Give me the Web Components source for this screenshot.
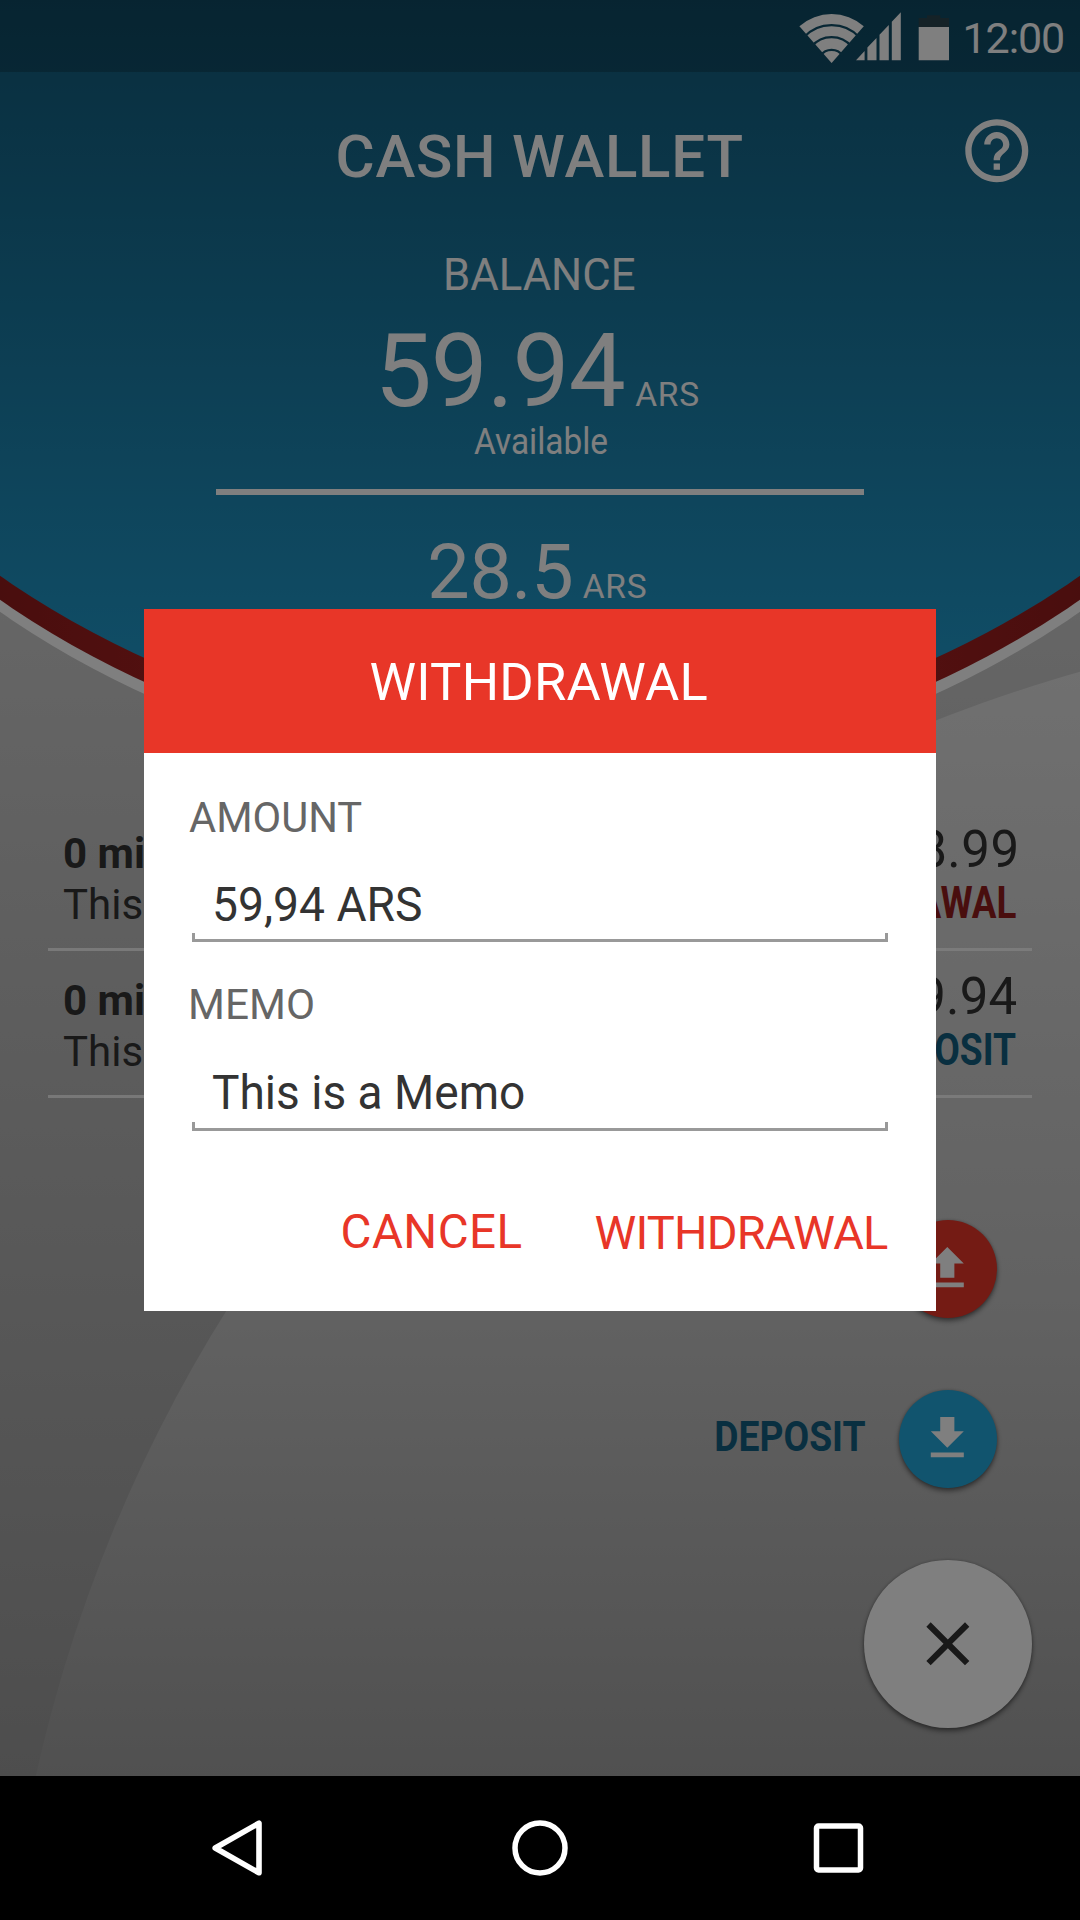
<!DOCTYPE html>
<html lang="en">
<head>
<meta charset="utf-8">
<title>Cash Wallet</title>
<style>
  html, body { margin: 0; padding: 0; background: #000; }
  body { width: 1080px; height: 1920px; overflow: hidden; font-family: Roboto, sans-serif; }
</style>
</head>
<body>
<wallet-app></wallet-app>

<script>
const define = (name, html, setup) => {
  const template = document.createElement('template');
  template.innerHTML = html;
  customElements.define(name, class extends HTMLElement {
    connectedCallback() {
      if (this.shadowRoot) return;
      this.attachShadow({ mode: 'open' }).append(template.content.cloneNode(true));
      if (setup) setup(this, this.shadowRoot);
    }
  });
};

/* A single line of text whose glyphs span exactly `width` pixels.
   Spacing is spread between letters, or the glyphs are narrowed with `squeeze`. */
const pen = document.createElement('canvas').getContext('2d');
customElements.define('fit-label', class extends HTMLElement {
  connectedCallback() {
    if (this.shadowRoot) return;
    const size = +this.getAttribute('size');
    const weight = this.getAttribute('weight') || 400;
    const width = +this.getAttribute('width');
    const text = this.textContent;
    pen.font = `${weight} ${size}px Roboto`;
    const m = pen.measureText(text);
    const left = m.actualBoundingBoxLeft;
    const ink = left + m.actualBoundingBoxRight;
    let rule = '';
    if (this.hasAttribute('squeeze')) {
      rule = `transform-origin:0 0;transform:scaleX(${width / ink}) translateX(${left}px);`;
    } else if (width) {
      rule = `letter-spacing:${(width - ink) / (text.length - 1)}px;margin-left:${left}px;`;
    }
    const box = width ? `width:${width}px;` : '';
    this.attachShadow({ mode: 'open' }).innerHTML = `<style>
      :host{display:block;flex:none;${box}height:${size}px;font-size:${size}px;font-weight:${weight};line-height:${size}px;white-space:pre}
      div{${rule}}
    </style><div><slot></slot></div>`;
  }
});

define('wallet-backdrop', `
<style>
  :host { position: absolute; inset: 0; z-index: 0; }
  svg { display: block; }
</style>
<svg width="1080" height="1776" viewBox="0 0 1080 1776">
  <defs>
    <linearGradient id="page" gradientUnits="userSpaceOnUse" x1="0" y1="600" x2="0" y2="1776"><stop offset="0" stop-color="#cccccc"/><stop offset="1" stop-color="#9b9b9b"/></linearGradient>
    <linearGradient id="disc" gradientUnits="userSpaceOnUse" x1="0" y1="670" x2="0" y2="1776"><stop offset="0" stop-color="#e0e0e0"/><stop offset=".57" stop-color="#c4c4c4"/><stop offset="1" stop-color="#a1a1a1"/></linearGradient>
    <linearGradient id="head" gradientUnits="userSpaceOnUse" x1="0" y1="0" x2="0" y2="744"><stop offset="0" stop-color="#125c7c"/><stop offset=".1" stop-color="#146284"/><stop offset="1" stop-color="#22a2d6"/></linearGradient>
    <linearGradient id="band" gradientUnits="userSpaceOnUse" x1="0" y1="0" x2="1080" y2="0"><stop offset="0" stop-color="#931c1c"/><stop offset=".5" stop-color="#cc2a2a"/><stop offset="1" stop-color="#931c1c"/></linearGradient>
  </defs>
  <rect width="1080" height="1776" fill="url(#page)"/>
  <circle cx="1479.7" cy="2095.6" r="1478.8" fill="url(#disc)"/>
  <circle cx="540" cy="-169" r="949.4" fill="#fff"/>
  <circle cx="540" cy="-181" r="949.4" fill="url(#band)"/>
  <circle cx="540" cy="-205" r="949.4" fill="url(#head)"/>
</svg>`);

define('status-bar', `
<style>
  :host { display: flex; height: 72px; padding: 0 17px 0 0; box-sizing: border-box; justify-content: flex-end; background: rgba(0,0,0,.2); color: #fff; }
  svg { flex: none; }
  fit-label { margin: 17.4px 0 0 2px; }
</style>
<svg width="165" height="72" viewBox="799 0 165 72" fill="#fff">
  <g transform="translate(831.6 63)">
    <path d="M0 0-32.2-36.8A48.8 48.8 0 0 1 32.2-36.8Z"/>
    <g fill="none" stroke="#114e69" stroke-width="2.2">
      <path d="M-28-25.5A38 38 0 0 1 28-25.5"/><path d="M-20-16.4A25.9 25.9 0 0 1 20-16.4"/><path d="M-11-7.3A13.2 13.2 0 0 1 11-7.3"/>
    </g>
  </g>
  <path d="M856 60.3 864.6 51V60.3ZM867.4 60.3V47.5L876.5 38V60.3ZM879.5 60.3V34.8L888.8 25V60.3ZM891.8 60.3V21.7L900.8 12.3V60.3Z"/>
  <path d="M918.7 27V18H927V15.3H940.3V18H949V27Z" fill="#2b444f"/>
  <path d="M918.7 27H949V60.2H918.7Z"/>
</svg>
<fit-label size="43" width="97.5">12:00</fit-label>`);

define('app-header', `
<style>
  :host { display: flex; flex-direction: column; align-items: center; height: 700px; color: #fff; }
  .bar { display: grid; grid-template-columns: 337.5px 1fr 121px; width: 1080px; height: 181px; }
  .bar fit-label { margin-top: 54.7px; }
  .bar svg { margin: 41px 0 0; }
  .row { display: flex; align-items: baseline; gap: 11.5px; }
  .available { margin-top: 2px; }
  hr { width: 648px; height: 6px; margin: 28.8px 0 40.5px; border: 0; background: #fff; }
</style>
<div class="bar">
  <span></span>
  <fit-label size="60" weight="500" width="405">CASH WALLET</fit-label>
  <svg width="75.6" height="75.6" viewBox="0 0 24 24" fill="#fff"><path d="M11 18h2v-2h-2v2zm1-16C6.48 2 2 6.48 2 12s4.480 10 10 10 10-4.480 10-10S17.520 2 12 2zm0 18c-4.410 0-8-3.590-8-8s3.590-8 8-8 8 3.590 8 8-3.590 8-8 8zm0-14c-2.210 0-4 1.790-4 4h2c0-1.100.9-2 2-2s2 .9 2 2c0 2-3 1.750-3 5h2c0-2.250 3-2.500 3-5 0-2.210-1.790-4-4-4z"/></svg>
</div>
<fit-label size="44" width="188.5" squeeze>BALANCE</fit-label>
<div class="row" style="margin-top:23.5px"><fit-label size="101.500" width="241.800">59.94</fit-label><fit-label size="33.5" width="63">ARS</fit-label></div>
<fit-label class="available" size="36" width="133" squeeze>Available</fit-label>
<hr>
<div class="row" style="margin-left:-4px"><fit-label size="75.5" width="141">28.5</fit-label><fit-label size="33.5" width="63">ARS</fit-label></div>`);

define('transaction-row', `
<style>
  :host { display: flex; justify-content: space-between; height: 147px; box-sizing: border-box; margin: 0 48px; padding: 28.6px 15.5px 0 15px; border-bottom: 3px solid rgba(255,255,255,.8); color: #333; }
  .side { display: flex; flex-direction: column; }
  .end { align-items: flex-end; margin-top: -8.2px; }
  .memo { margin-top: 9.5px; }
  .kind { margin: 6.4px 1px 0 0; color: var(--kind); }
</style>
<div class="side"><fit-label size="42" weight="700"></fit-label><fit-label class="memo" size="42"></fit-label></div>
<div class="side end"><slot name="amount"></slot><div class="kind"><slot name="kind"></slot></div></div>`,
(host, root) => {
  const labels = root.querySelectorAll('fit-label');
  labels[0].textContent = host.getAttribute('when');
  labels[1].textContent = host.getAttribute('memo');
});

define('action-button', `
<style>
  :host { display: flex; align-items: center; justify-content: flex-end; gap: 34px; color: #125f80; }
  .disc { display: flex; align-items: center; justify-content: center; flex: none; width: var(--d); height: var(--d); border-radius: 50%; background: var(--fill); box-shadow: 0 3px 5px rgba(0,0,0,.45), 0 0 3px rgba(0,0,0,.2); }
</style>
<slot name="label"></slot><div class="disc"><slot></slot></div>`);

define('memo-field', `
<style>
  :host { display: block; }
  .value { padding-left: 23px; height: 52.4px; color: #333; }
  .line { width: 690px; height: 6px; border: solid #999; border-width: 0 3px 3px; }
</style>
<div class="value"><slot></slot></div><div class="line"></div>`);

define('withdrawal-dialog', `
<style>
  :host { position: absolute; left: 144px; top: 609.4px; z-index: 3; width: 792px; height: 701.2px; background: #fff; color: #666; }
  header { display: flex; justify-content: center; height: 144px; background: #e83628; color: #fff; }
  header fit-label { margin: 46.4px 3px 0 0; }
  .body { padding: 42.4px 48px 0 48px; }
  .body > fit-label { margin-left: -3px; }
  memo-field fit-label { display: block; }
  .actions { display: flex; justify-content: flex-end; gap: 74px; margin-top: 78px; color: #e83628; }
</style>
<header><fit-label size="52.5" width="336">WITHDRAWAL</fit-label></header>
<div class="body">
  <fit-label size="43" width="172.500" squeeze>AMOUNT</fit-label>
  <memo-field style="margin-top:41.800px"><fit-label size="48" width="206" squeeze>59,94 ARS</fit-label></memo-field>
  <fit-label size="43" width="122.500" style="margin:41.300px 0 .500px -1px" squeeze>MEMO</fit-label>
  <memo-field style="margin-top:42.900px"><fit-label size="48" width="311" style="margin-left:-2px" squeeze>This is a Memo</fit-label></memo-field>
  <div class="actions"><fit-label size="47.500" width="179" style="margin-top:.3px">CANCEL</fit-label><fit-label size="47" width="292.500">WITHDRAWAL</fit-label></div>
</div>`);

define('nav-bar', `
<style>
  :host { position: relative; z-index: 4; display: flex; height: 144px; align-items: center; justify-content: center; gap: 238px; background: #000; }
  svg { display: block; }
</style>
<svg width="60" height="60" viewBox="-30 -30 60 60" fill="none" stroke="#fff" stroke-width="5.600" stroke-linejoin="round"><path d="M-26.800 0 17-24.800V24.800Z"/></svg>
<svg width="60" height="60" viewBox="-30 -30 60 60" fill="none" stroke="#fff" stroke-width="5.500"><circle r="25"/></svg>
<svg width="60" height="60" viewBox="-30 -30 60 60" fill="none" stroke="#fff" stroke-width="5.500"><rect x="-21.500" y="-22" width="44" height="44" rx="2"/></svg>`);

define('wallet-app', `
<style>
  :host { position: relative; display: flex; flex-direction: column; width: 1080px; height: 1920px; overflow: hidden; }
  .screen { position: relative; z-index: 1; display: flex; flex-direction: column; height: 1776px; }
  .list { display: flex; flex-direction: column; margin-top: 32px; }
  .actions { display: flex; flex-direction: column; align-items: flex-end; padding-right: 48px; margin-top: 121.5px; }
  .actions action-button { --d: 98px; margin-right: 35.5px; margin-bottom: 72px; }
  .actions action-button.main { --d: 168px; margin: 0; }
  .actions fit-label { margin-bottom: 4px; }
  .scrim { position: absolute; inset: 0 0 144px; z-index: 2; background: rgba(0,0,0,.5); }
  svg { display: block; flex: none; }
</style>
<wallet-backdrop></wallet-backdrop>
<div class="screen">
  <status-bar></status-bar>
  <app-header></app-header>
  <div class="list">
    <transaction-row when="0 min" memo="This" style="--kind:#931c1c"><fit-label slot="amount" size="51" width="125.5">28.99</fit-label><fit-label slot="kind" size="43.5" weight="700" width="238" squeeze>WITHDRAWAL</fit-label></transaction-row>
    <transaction-row when="0 min" memo="This" style="--kind:#125f80"><fit-label slot="amount" size="51" width="125">59.94</fit-label><fit-label slot="kind" size="43.5" weight="700" width="149" squeeze>DEPOSIT</fit-label></transaction-row>
  </div>
  <div class="actions">
    <action-button style="--fill:#e83628"><svg width="56.6" height="56.6" viewBox="0 0 24 24" fill="#fff"><path d="M9 16h6v-6h4l-7-7-7 7h4zm-4 2h14v2H5z"/></svg></action-button>
    <action-button style="--fill:#23a8dd"><fit-label slot="label" size="43" weight="700" width="149" squeeze>DEPOSIT</fit-label><svg width="56.6" height="56.6" viewBox="0 0 24 24" fill="#fff"><path d="M19 9h-4V3H9v6H5l7 7 7-7zM5 18v2h14v-2H5z"/></svg></action-button>
    <action-button class="main" style="--fill:#fff"><svg width="73.7" height="73.7" viewBox="0 0 24 24" fill="#333"><path d="M19 6.410L17.590 5 12 10.590 6.410 5 5 6.410 10.590 12 5 17.590 6.410 19 12 13.410 17.590 19 19 17.590 13.410 12z"/></svg></action-button>
  </div>
</div>
<div class="scrim"></div>
<withdrawal-dialog></withdrawal-dialog>
<nav-bar></nav-bar>`);
</script>
</body>
</html>
